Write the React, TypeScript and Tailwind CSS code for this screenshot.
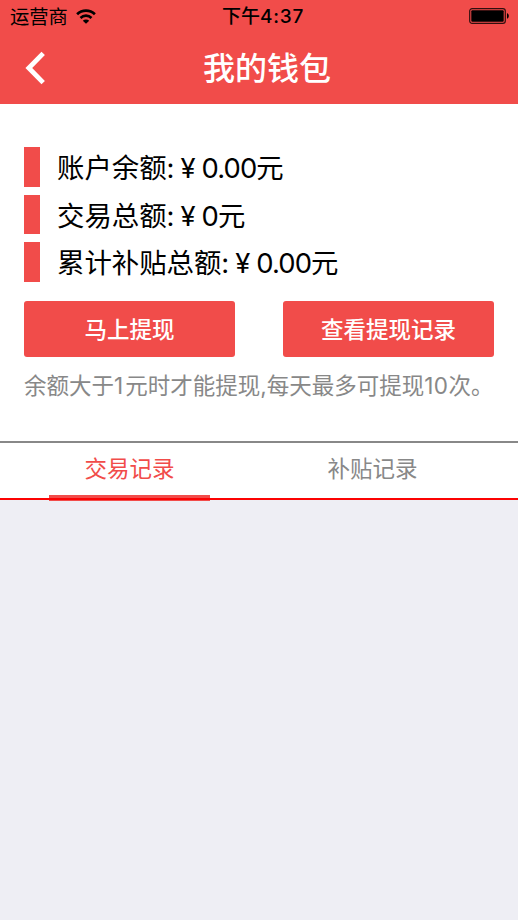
import type { ReactNode } from "react";

const balances = [
  { label: "账户余额:", amount: "0.00" },
  { label: "交易总额:", amount: "0" },
  { label: "累计补贴总额:", amount: "0.00" },
];

function StatusBar() {
  return (
    <div className="relative flex h-8 items-center justify-between pl-[10px] pr-2 text-black">
      <div className="flex items-center gap-2">
        <span className="pt-0.5 text-[19.3px] leading-8">运营商</span>
        <svg className="h-[15px] w-5" viewBox="0 0 20 15" fill="none" stroke="currentColor" strokeWidth={2.7}>
          <path d="M1.1 5.2a12.8 12.8 0 0 1 17.8 0" />
          <path d="M4.5 8.9a8 8 0 0 1 11 0" />
          <path d="M10 14.8 6.8 11.7a4.6 4.6 0 0 1 6.4 0Z" fill="currentColor" stroke="none" />
        </svg>
      </div>
      <span className="absolute left-[222px] top-px whitespace-nowrap text-[19px] font-medium leading-8">
        下午<span className="tracking-[0.8px]">4:37</span>
      </span>
      <svg className="h-4 w-[41px]" viewBox="0 0 41 16">
        <rect x="0.7" y="0.7" width="35.6" height="14.6" rx="2.4" fill="none" stroke="#000" strokeWidth="1.2" strokeOpacity="0.8" />
        <rect x="2.3" y="2.3" width="32.4" height="11.4" rx="1" />
        <path d="M38 5.3c2.4.5 2.4 4.9 0 5.4Z" />
      </svg>
    </div>
  );
}

function Header() {
  return (
    <header className="h-[104px] bg-[#f14c4a]">
      <StatusBar />
      <div className="relative flex h-[72px] items-center justify-center pl-4">
        <svg className="absolute left-[25px] top-[19px] h-[34px] w-5" viewBox="0 0 20 34" fill="none" stroke="#fff" strokeWidth={4.8}>
          <path d="M18.2 2.4 3.8 17l14.4 14.6" />
        </svg>
        <h1 className="pt-0.5 text-[32px] font-medium leading-none text-white">我的钱包</h1>
      </div>
    </header>
  );
}

function BalanceRow({ label, amount }: { label: string; amount: string }) {
  return (
    <div className="flex h-[39.5px] items-center gap-[17px]">
      <div className="h-full w-4 bg-[#f14c4a]" />
      <div className="flex items-center whitespace-nowrap pt-[3.5px] text-[27.4px] leading-none text-black">
        <span>{label}</span>
        <span className="ml-[6px]">¥</span>
        <span className="ml-[6px] tracking-[-0.9px]">{amount}</span>
        <span>元</span>
      </div>
    </div>
  );
}

function Button({ children }: { children: ReactNode }) {
  return (
    <button className="h-14 w-[211px] rounded-[3px] bg-[#f14c4a] pt-0.5 text-[22.5px] font-medium leading-none text-white">
      {children}
    </button>
  );
}

export default function App() {
  return (
    <div className="min-h-screen w-[518px] overflow-hidden bg-[#eeeef4] font-[Inter,'Noto_Sans_CJK_SC',sans-serif]">
      <Header />
      <section className="h-[337px] bg-white px-6 pt-[43.3px]">
        <div className="flex flex-col gap-2">
          {balances.map((item) => (
            <BalanceRow key={item.label} {...item} />
          ))}
        </div>
        <div className="mt-[19px] flex justify-between">
          <Button>马上提现</Button>
          <Button>查看提现记录</Button>
        </div>
        <p className="mt-[17px] whitespace-nowrap text-[22.5px] leading-6 text-[#888]">
          余额大于<span className="tracking-[2px]">1</span>元时才能提现,每天最多可提现
          <span className="tracking-[0.5px]">10</span>次。
        </p>
      </section>
      <nav className="relative flex h-[59px] border-b-2 border-t-2 border-b-[#fc0303] border-t-[#888] bg-white px-2 text-[22.5px] leading-[51px]">
        <div className="w-[243px] text-center text-[#f14c4a]">交易记录</div>
        <div className="w-[243px] text-center text-[#888]">补贴记录</div>
        <div className="absolute left-[49px] top-[52px] h-[6px] w-[161px] bg-[#f14c4a]">
          <div className="mt-[3px] h-0.5 bg-[#fc0303]" />
        </div>
      </nav>
    </div>
  );
}
